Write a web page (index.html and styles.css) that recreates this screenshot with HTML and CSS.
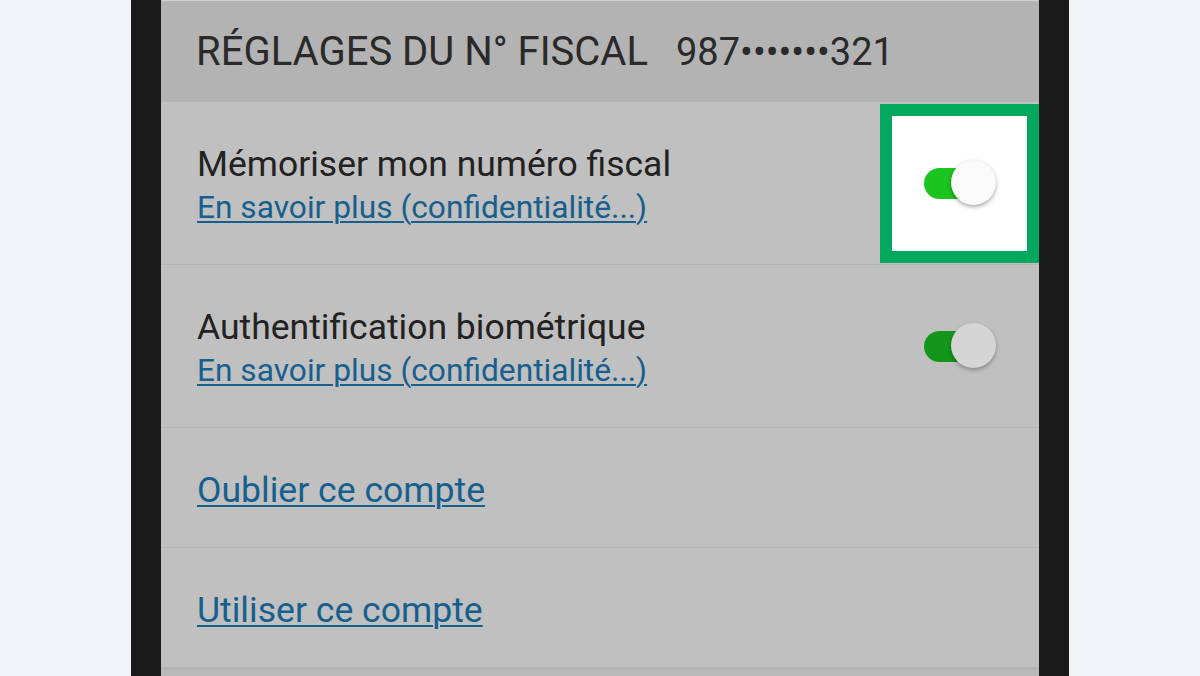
FILE: index.html
```html
<!DOCTYPE html>
<html lang="fr">
<head>
  <meta charset="UTF-8" />
  <meta name="viewport" content="width=device-width, initial-scale=1.0"/>
  <title>Réglages du n° fiscal</title>
  <link rel="stylesheet" href="styles.css">
</head>
<body>
  <div class="phone">
    <div class="screen">
      <div class="header">
        RÉGLAGES DU N° FISCAL<span class="fiscal-number">987•••••••321</span>
      </div>

      <div class="row row-tall">
        <div class="row-text">
          <div class="row-title">Mémoriser mon numéro fiscal</div>
          <a class="link" href="#">En savoir plus (confidentialité...)</a>
        </div>
        <div class="toggle-box highlight">
          <div class="toggle">
            <div class="track"></div>
            <div class="thumb"></div>
          </div>
        </div>
      </div>

      <div class="row row-tall">
        <div class="row-text">
          <div class="row-title">Authentification biométrique</div>
          <a class="link" href="#">En savoir plus (confidentialité...)</a>
        </div>
        <div class="toggle-box">
          <div class="toggle dim">
            <div class="track"></div>
            <div class="thumb"></div>
          </div>
        </div>
      </div>

      <div class="row row-short">
        <a class="link link-big" href="#">Oublier ce compte</a>
      </div>

      <div class="row row-short">
        <a class="link link-big" href="#">Utiliser ce compte</a>
      </div>

      <div class="footer"></div>
    </div>
  </div>
</body>
</html>
```

FILE: styles.css
```css
body {
  font-family: Roboto, "Noto Sans", sans-serif;
  margin: 0;
  padding: 0;
  background: #f2f4f9;
  height: 676px;
  overflow: hidden;
}
.phone {
  width: 878px;
  height: 676px;
  margin: 0 auto;
  border-left: 30px solid #1b1b1b;
  border-right: 30px solid #1b1b1b;
  box-shadow: inset 3px 0 0 #121212;
}
.screen {
  height: 100%;
  border-top: 1px solid #cfcfcf;
  box-sizing: border-box;
  background: #c0c0c0;
  display: flex;
  flex-direction: column;
}
.header {
  height: 101px;
  flex-shrink: 0;
  background: #b3b3b3;
  display: flex;
  align-items: center;
  padding-left: 35px;
  font-size: 40px;
  color: #2a2a2a;
}
.fiscal-number { margin-left: 28px; font-size: 38px; }
.row {
  display: flex;
  align-items: center;
  justify-content: space-between;
  padding-left: 36px;
  border-bottom: 1px solid #b2b2b2;
  background: #c0c0c0;
  flex-shrink: 0;
  box-sizing: border-box;
}
.row-tall { height: 163px; }
.row-short { height: 120px; padding-top: 5px; }
.row-text {
  display: flex;
  flex-direction: column;
  padding-top: 5px;
}
.row-title {
  font-size: 35.5px;
  color: #222;
  line-height: 44px;
}
.link {
  font-size: 31.7px;
  line-height: 44px;
  color: #165f8e;
  text-decoration: underline;
  text-underline-offset: 3px;
  text-decoration-thickness: 2px;
}
.link-big { font-size: 35.6px; }
.toggle-box {
  width: 135px;
  height: 135px;
  border: 12px solid transparent;
  display: flex;
  align-items: center;
  justify-content: center;
}
.toggle-box.highlight {
  background: #fff;
  border-color: #02a85e;
}
.toggle {
  position: relative;
  width: 72px;
  height: 46px;
}
.track {
  position: absolute;
  left: 0;
  top: 8px;
  width: 62px;
  height: 31px;
  border-radius: 16px;
  background: #1bc41f;
}
.thumb {
  position: absolute;
  right: 0;
  top: 0;
  width: 45px;
  height: 45px;
  border-radius: 50%;
  background: #fafafa;
  box-shadow: 0 2px 4px rgba(0,0,0,0.35);
}
.dim .track { background: #13961b; }
.dim .thumb { background: #d5d5d5; box-shadow: 0 2px 4px rgba(0,0,0,0.3); }
.footer {
  flex: 1;
  border-top: 1px solid #b0b0b0;
  background: #b9b9b9;
}
```
